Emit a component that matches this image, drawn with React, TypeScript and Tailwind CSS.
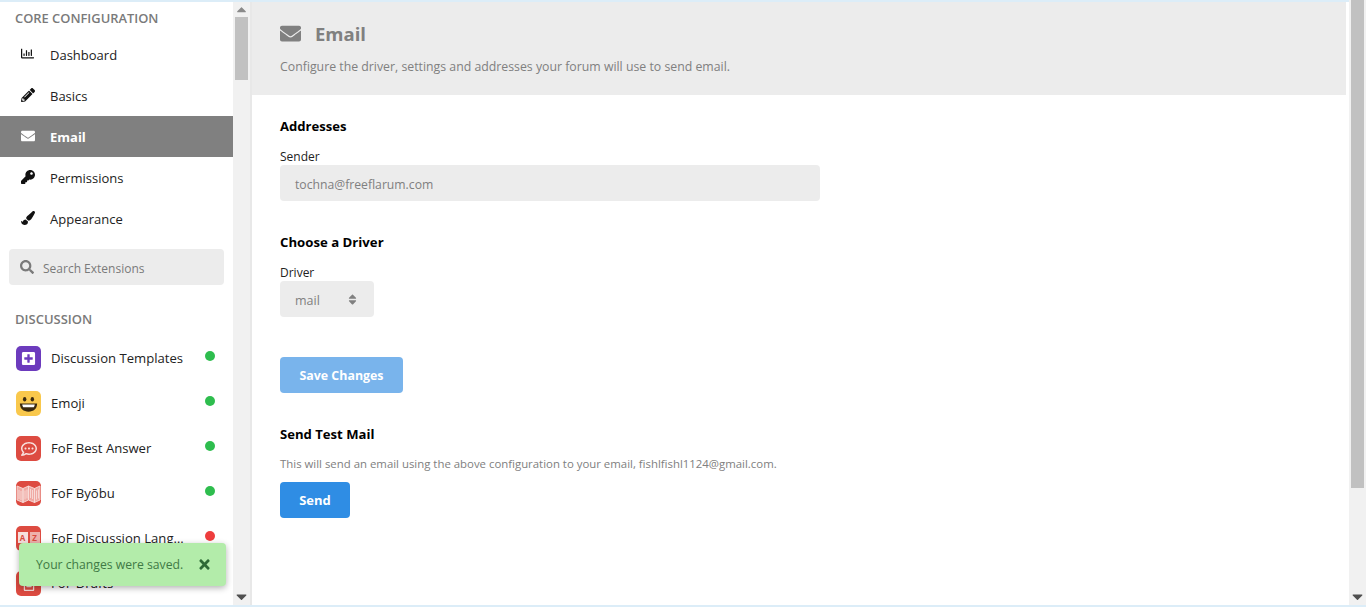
import React from 'react';
import {
  FaRegChartBar,
  FaPencilAlt,
  FaEnvelope,
  FaKey,
  FaPaintBrush,
  FaSearch,
  FaSort,
  FaTimes,
  FaPlusSquare,
  FaRegCommentDots,
  FaRegFileAlt,
  FaCaretUp,
  FaCaretDown,
} from 'react-icons/fa';

// Core admin links
const coreLinks = [
  { label: 'Dashboard', icon: FaRegChartBar, size: 'text-[13px]' },
  { label: 'Basics', icon: FaPencilAlt, size: 'text-[14px]' },
  { label: 'Email', icon: FaEnvelope, size: 'text-[14px]', active: true },
  { label: 'Permissions', icon: FaKey, size: 'text-[14px]' },
  { label: 'Appearance', icon: FaPaintBrush, size: 'text-[14px]' },
];

const EmojiFace = () => (
  <svg viewBox="0 0 24 24" className="w-[23px] h-[23px]">
    <ellipse cx="8" cy="7.500" rx="1.800" ry="2.400" fill="#3a2a10" />
    <ellipse cx="16" cy="7.500" rx="1.800" ry="2.400" fill="#3a2a10" />
    <path d="M3 12h18c0 5.500-3.800 8.500-9 8.500s-9-3-9-8.500z" fill="#3a2a10" />
    <path d="M5.500 13h13c0 1-.4 2-1 2.800h-11c-.6-.8-1-1.800-1-2.800z" fill="#fff" />
  </svg>
);

const ByobuIcon = () => (
  <svg viewBox="0 0 25 25" className="w-[25px] h-[25px]" fill="#f0a9a3" stroke="#f7dcd9" strokeWidth="0.9">
    <path d="M1 5l6 2.500v14L1 19zM7 7.500L12.500 5v14L7 21.500zM12.500 5l6 2.500v14l-6-2.500zM18.500 7.500L24 5v14l-5.500 2.500z" />
    <path d="M3 9v9M5 10v9M9 9.500v9M11 8.500v9M14.500 8v9M16.500 9v9M20.500 9.500v9M22.500 8.500v9" />
  </svg>
);

const LangIcon = () => (
  <div className="flex gap-[2px] mb-[3px]">
    <span className="w-[10px] h-[11px] bg-[#f6dfdc] text-[#d9493f] text-[8px] leading-[11px] text-center font-bold">A</span>
    <span className="w-[10px] h-[11px] bg-[#eeb0ab] text-[#d9493f] text-[8px] leading-[11px] text-center font-bold">Z</span>
  </div>
);

const extensions = [
  { label: 'Discussion Templates', bg: 'bg-[#6c3bbd]', icon: <FaPlusSquare className="text-white text-[15px]" />, dot: 'bg-[#2ebd4e]' },
  { label: 'Emoji', bg: 'bg-[#f9c84c]', icon: <EmojiFace />, dot: 'bg-[#2ebd4e]' },
  { label: 'FoF Best Answer', bg: 'bg-[#dd4b41]', icon: <FaRegCommentDots className="text-[#f8e0dd] text-[16px]" />, dot: 'bg-[#2ebd4e]' },
  { label: 'FoF Byōbu', bg: 'bg-[#dd4b41]', icon: <ByobuIcon />, dot: 'bg-[#2ebd4e]' },
  { label: 'FoF Discussion Language', bg: 'bg-[#dd4b41]', icon: <LangIcon />, dot: 'bg-[#ee3d3d]' },
  { label: 'FoF Drafts', bg: 'bg-[#dd4b41]', icon: <FaRegFileAlt className="text-[#f8e0dd] text-[14px]" />, dot: 'bg-[#2ebd4e]' },
];

const Sidebar = () => (
  <div className="w-[233px] shrink-0 h-full overflow-hidden bg-white relative">
    <h3 className="pl-[15px] pt-[9px] text-[12.900px] leading-[14px] font-semibold text-[#7a7a7a] h-[32px]">CORE CONFIGURATION</h3>
    <ul>
      {coreLinks.map((l) => (
        <li
          key={l.label}
          className={`h-[41px] flex items-center pl-[21px] pt-[2px] text-[13px] ${l.active ? 'bg-[#808080] text-white font-bold' : 'text-[#222]'}`}
        >
          <span className={`w-[29px] mb-[4px] ${l.size} ${l.active ? 'text-white' : 'text-[#111]'}`}>
            <l.icon />
          </span>
          {l.label}
        </li>
      ))}
    </ul>
    <div className="mx-[9px] mt-[10px] h-[36px] rounded-[4px] bg-[#ececec] flex items-center pl-[11px] pt-[3px] text-[12px] text-[#7a7a7a]">
      <FaSearch className="text-[14px] mr-[9px] mb-[4px]" />
      Search Extensions
    </div>
    <h3 className="pl-[15px] pt-[27px] text-[13px] leading-[14px] font-semibold text-[#7a7a7a] h-[51px]">DISCUSSION</h3>
    <ul>
      {extensions.map((e) => (
        <li key={e.label} className="h-[45px] flex items-center pl-[16px] text-[13.100px] text-[#222]">
          <span className={`w-[25px] h-[25px] rounded-[5px] shrink-0 flex items-center justify-center overflow-hidden ${e.bg}`}>{e.icon}</span>
          <span className="ml-[10px] w-[135px] truncate">{e.label}</span>
          <span className={`ml-[19px] mb-[5px] w-[10px] h-[10px] rounded-full ${e.dot}`} />
        </li>
      ))}
    </ul>
    <div className="absolute left-[19px] top-[541px] w-[207px] h-[43px] rounded-[4px] bg-[#b3ecaa] shadow-[0_2px_6px_rgba(0,0,0,0.3)] flex items-center pl-[17px] text-[12.200px] text-[#3f7a45]">
      <span className="pt-[2px]">Your changes were saved.</span>
      <FaTimes className="ml-[14px] text-[15px] text-[#2d6a36]" />
    </div>
  </div>
);

export default function App() {
  return (
    <div className="w-[1366px] h-[607px] overflow-hidden flex flex-col bg-white font-['Open_Sans',sans-serif]">
      <div className="flex-1 min-h-0 flex">
        <div className="flex-1 min-w-0 flex flex-col">
          <div className="h-[2px] shrink-0 bg-[#dcedf8]" />
          <div className="flex-1 min-h-0 flex">
            <Sidebar />
            {/* sidebar scrollbar */}
            <div className="w-[17px] shrink-0 h-full bg-[#f1f1f1] flex flex-col items-center">
              <FaCaretUp className="h-[15px] shrink-0 text-[#8a8a8a] text-[11px]" />
              <div className="w-[13px] h-[63px] bg-[#c1c1c1]" />
              <div className="flex-1" />
              <FaCaretDown className="h-[17px] shrink-0 text-[#505050] text-[11px]" />
            </div>
            <div className="w-[2px] shrink-0 bg-[#e8e8e8]" />
            <main className="flex-1 min-w-0">
              <header className="h-[93px] mr-[3px] bg-[#ececec] pl-[28px] pt-[20px]">
                <h2 className="flex items-center text-[18.500px] leading-[24px] font-bold text-[#808080]">
                  <FaEnvelope className="text-[21px] mr-[14px] mb-[2px]" />
                  Email
                </h2>
                <p className="mt-[12px] text-[12.300px] leading-[18px] text-[#808080]">Configure the driver, settings and addresses your forum will use to send email.</p>
              </header>
              <div className="pl-[28px] pt-[23px]">
                <h3 className="text-[13.100px] leading-[16px] font-bold text-black">Addresses</h3>
                <label className="block mt-[15px] text-[12px] leading-[16px] text-[#222]">Sender</label>
                <div className="w-[540px] h-[36px] rounded-[4px] bg-[#ececec] flex items-center pl-[15px] pt-[5px] text-[12.200px] text-[#808080]">tochna@freeflarum.com</div>
                <h3 className="mt-[33px] text-[13.200px] leading-[16px] font-bold text-black">Choose a Driver</h3>
                <label className="block mt-[15px] text-[12px] leading-[16px] text-[#222]">Driver</label>
                <div className="w-[94px] h-[36px] rounded-[4px] bg-[#ececec] flex items-center pl-[15px] text-[12.500px] text-[#808080]">
                  <span className="pt-[5px]">mail</span>
                  <FaSort className="ml-[26px] text-[13px] text-[#808080]" />
                </div>
                <button className="block mt-[40px] w-[123px] h-[36px] pt-[2px] rounded-[4px] bg-[#79b4ec] text-white text-[12.400px] font-bold">Save Changes</button>
                <h3 className="mt-[33px] text-[13.100px] leading-[16px] font-bold text-black">Send Test Mail</h3>
                <p className="mt-[14px] text-[11.400px] leading-[16px] text-[#808080]">This will send an email using the above configuration to your email, fishlfishl1124@gmail.com.</p>
                <button className="block mt-[10px] w-[70px] h-[36px] pt-[2px] rounded-[4px] bg-[#2f8de4] text-white text-[13px] font-bold">Send</button>
              </div>
            </main>
          </div>
        </div>
        {/* page scrollbar */}
        <div className="w-[17px] shrink-0 h-full bg-[#f1f1f1] flex flex-col items-center">
          <div className="w-[13px] h-[488px] bg-[#c1c1c1]" />
          <div className="flex-1" />
          <FaCaretDown className="h-[17px] shrink-0 text-[#505050] text-[11px]" />
        </div>
      </div>
      <div className="h-[2px] shrink-0 bg-[#dcedf8]" />
    </div>
  );
}
